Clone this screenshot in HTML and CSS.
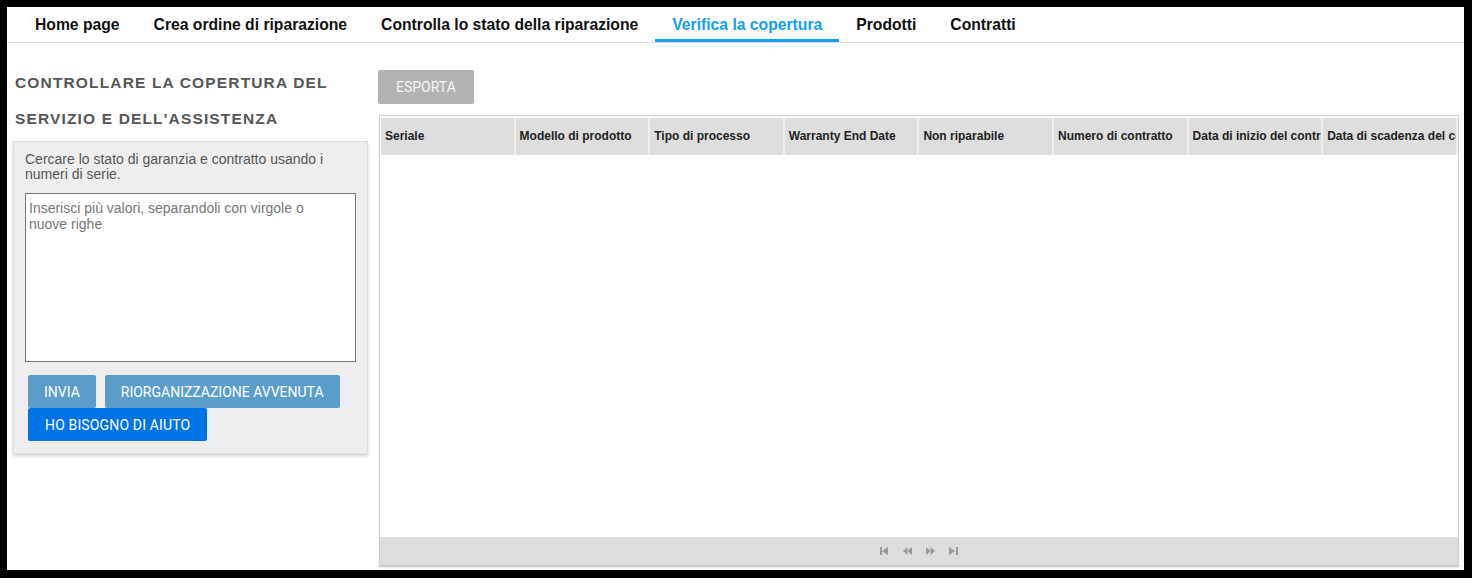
FILE: index.html
```html
<!DOCTYPE html>
<html>
<head>
  <title>Verifica la copertura</title>
  <link rel="stylesheet" href="styles.css">
</head>
<body>
  <div class="frame">
    <nav class="tabs">
      <a class="tab">Home page</a>
      <a class="tab">Crea ordine di riparazione</a>
      <a class="tab">Controlla lo stato della riparazione</a>
      <a class="tab active">Verifica la copertura</a>
      <a class="tab">Prodotti</a>
      <a class="tab">Contratti</a>
    </nav>
    <div class="main">
      <aside class="side">
        <h2 class="title">Controllare la copertura del servizio e dell'assistenza</h2>
        <div class="panel">
          <p class="hint">Cercare lo stato di garanzia e contratto usando i numeri di serie.</p>
          <textarea class="serials" placeholder="Inserisci più valori, separandoli con virgole o nuove righe"></textarea>
          <div class="actions">
            <button class="btn btn-light">Invia</button>
            <button class="btn btn-light">Riorganizzazione avvenuta</button>
            <button class="btn btn-help">Ho bisogno di aiuto</button>
          </div>
        </div>
      </aside>
      <section class="results">
        <button class="btn btn-export">Esporta</button>
        <div class="grid">
          <div class="grid-head">
            <div class="cell">Seriale</div>
            <div class="cell">Modello di prodotto</div>
            <div class="cell">Tipo di processo</div>
            <div class="cell">Warranty End Date</div>
            <div class="cell">Non riparabile</div>
            <div class="cell">Numero di contratto</div>
            <div class="cell">Data di inizio del contratto</div>
            <div class="cell">Data di scadenza del contratto</div>
          </div>
          <div class="grid-body"></div>
          <div class="grid-pager">
            <svg width="9" height="8" viewBox="0 0 9 8"><rect x="0" y="0" width="2" height="8"/><polygon points="2,4 8,0 8,8"/></svg>
            <svg width="9" height="8" viewBox="0 0 9 8"><polygon points="0,4 4.5,0 4.5,8"/><polygon points="4.5,4 9,0 9,8"/></svg>
            <svg width="9" height="8" viewBox="0 0 9 8"><polygon points="0,0 4.5,4 0,8"/><polygon points="4.5,0 9,4 4.5,8"/></svg>
            <svg width="9" height="8" viewBox="0 0 9 8"><polygon points="0,0 6,4 0,8"/><rect x="7" y="0" width="2" height="8"/></svg>
          </div>
        </div>
      </section>
    </div>
  </div>
</body>
</html>
```

FILE: styles.css
```css
body {
  margin: 0;
  padding: 0;
  overflow: hidden;
  font-family: "Liberation Sans", Arial, sans-serif;
  background: white;
}
.frame {
  box-sizing: border-box;
  width: 1472px;
  height: 578px;
  border-style: solid;
  border-color: black;
  border-width: 7px 8px 8px 7px;
  display: flex;
  flex-direction: column;
}
.tabs {
  display: flex;
  height: 35px;
  padding-left: 11px;
  border-bottom: 1px solid #dcdcdc;
}
.tab {
  padding: 0 17px;
  line-height: 35px;
  font-size: 15.7px;
  font-weight: bold;
  color: #111;
  cursor: pointer;
}
.tab.active {
  color: #14a0ee;
  box-shadow: inset 0 -3px 0 #14a0ee;
}
.main {
  flex: 1;
  display: flex;
  min-height: 0;
}
.side {
  width: 371px;
  box-sizing: border-box;
  padding: 22px 10px 0 6px;
}
.title {
  margin: 0 0 4px 2px;
  font-size: 15.5px;
  line-height: 36px;
  letter-spacing: 1.15px;
  text-transform: uppercase;
  color: #555;
}
.panel {
  background: #eee;
  border: 1px solid #ddd;
  box-shadow: 0 2px 3px rgba(0, 0, 0, 0.18);
  padding: 10px 11px 12px 11px;
}
.hint {
  margin: 0 0 11px 0;
  font-size: 14px;
  line-height: 15px;
  color: #555;
}
.serials {
  display: block;
  box-sizing: border-box;
  width: 331px;
  height: 169px;
  margin: 0;
  padding: 6px 24px 3px 3px;
  border: 1px solid #767676;
  font-family: "Liberation Sans", Arial, sans-serif;
  font-size: 14px;
  line-height: 16px;
  resize: none;
}
.serials::placeholder {
  color: #777;
}
.actions {
  display: flex;
  flex-wrap: wrap;
  column-gap: 9px;
  margin: 13px 0 0 3px;
}
.btn {
  height: 33px;
  padding: 0 16px;
  border: none;
  border-radius: 2px;
  font-family: Roboto, "Liberation Sans", sans-serif;
  font-size: 14px;
  text-transform: uppercase;
  color: white;
  cursor: pointer;
}
.btn-light {
  background: #5b9dc9;
}
.btn-help {
  background: #0073e6;
  padding: 0 17px;
  letter-spacing: 0.15px;
}
.results {
  flex: 1;
  display: flex;
  flex-direction: column;
  padding: 27px 5px 3px 0;
  min-width: 0;
}
.btn-export {
  align-self: flex-start;
  height: 34px;
  padding: 0 18px;
  background: #b3b3b3;
  color: #f4f4f4;
}
.grid {
  flex: 1;
  display: flex;
  flex-direction: column;
  margin: 11px 0 0 1px;
  border: 1px solid #cfcfcf;
  box-shadow: 0 1px 2px rgba(0, 0, 0, 0.1);
  overflow: hidden;
}
.grid-head {
  display: flex;
  margin: 2px 1px 0 1px;
  background: white;
}
.cell {
  flex: none;
  box-sizing: border-box;
  width: 134.6px;
  height: 37px;
  line-height: 37px;
  padding-left: 4px;
  background: #dedede;
  border-right: 2px solid #eeeeee;
  font-size: 12px;
  font-weight: bold;
  color: #222;
  white-space: nowrap;
  overflow: hidden;
}
.grid-body {
  flex: 1;
  background: white;
}
.grid-pager {
  height: 28px;
  background: #dddddd;
  border-bottom: 1px solid #cccccc;
  display: flex;
  justify-content: center;
  align-items: center;
  gap: 14px;
}
.grid-pager svg {
  fill: #9a9a9a;
}
```
